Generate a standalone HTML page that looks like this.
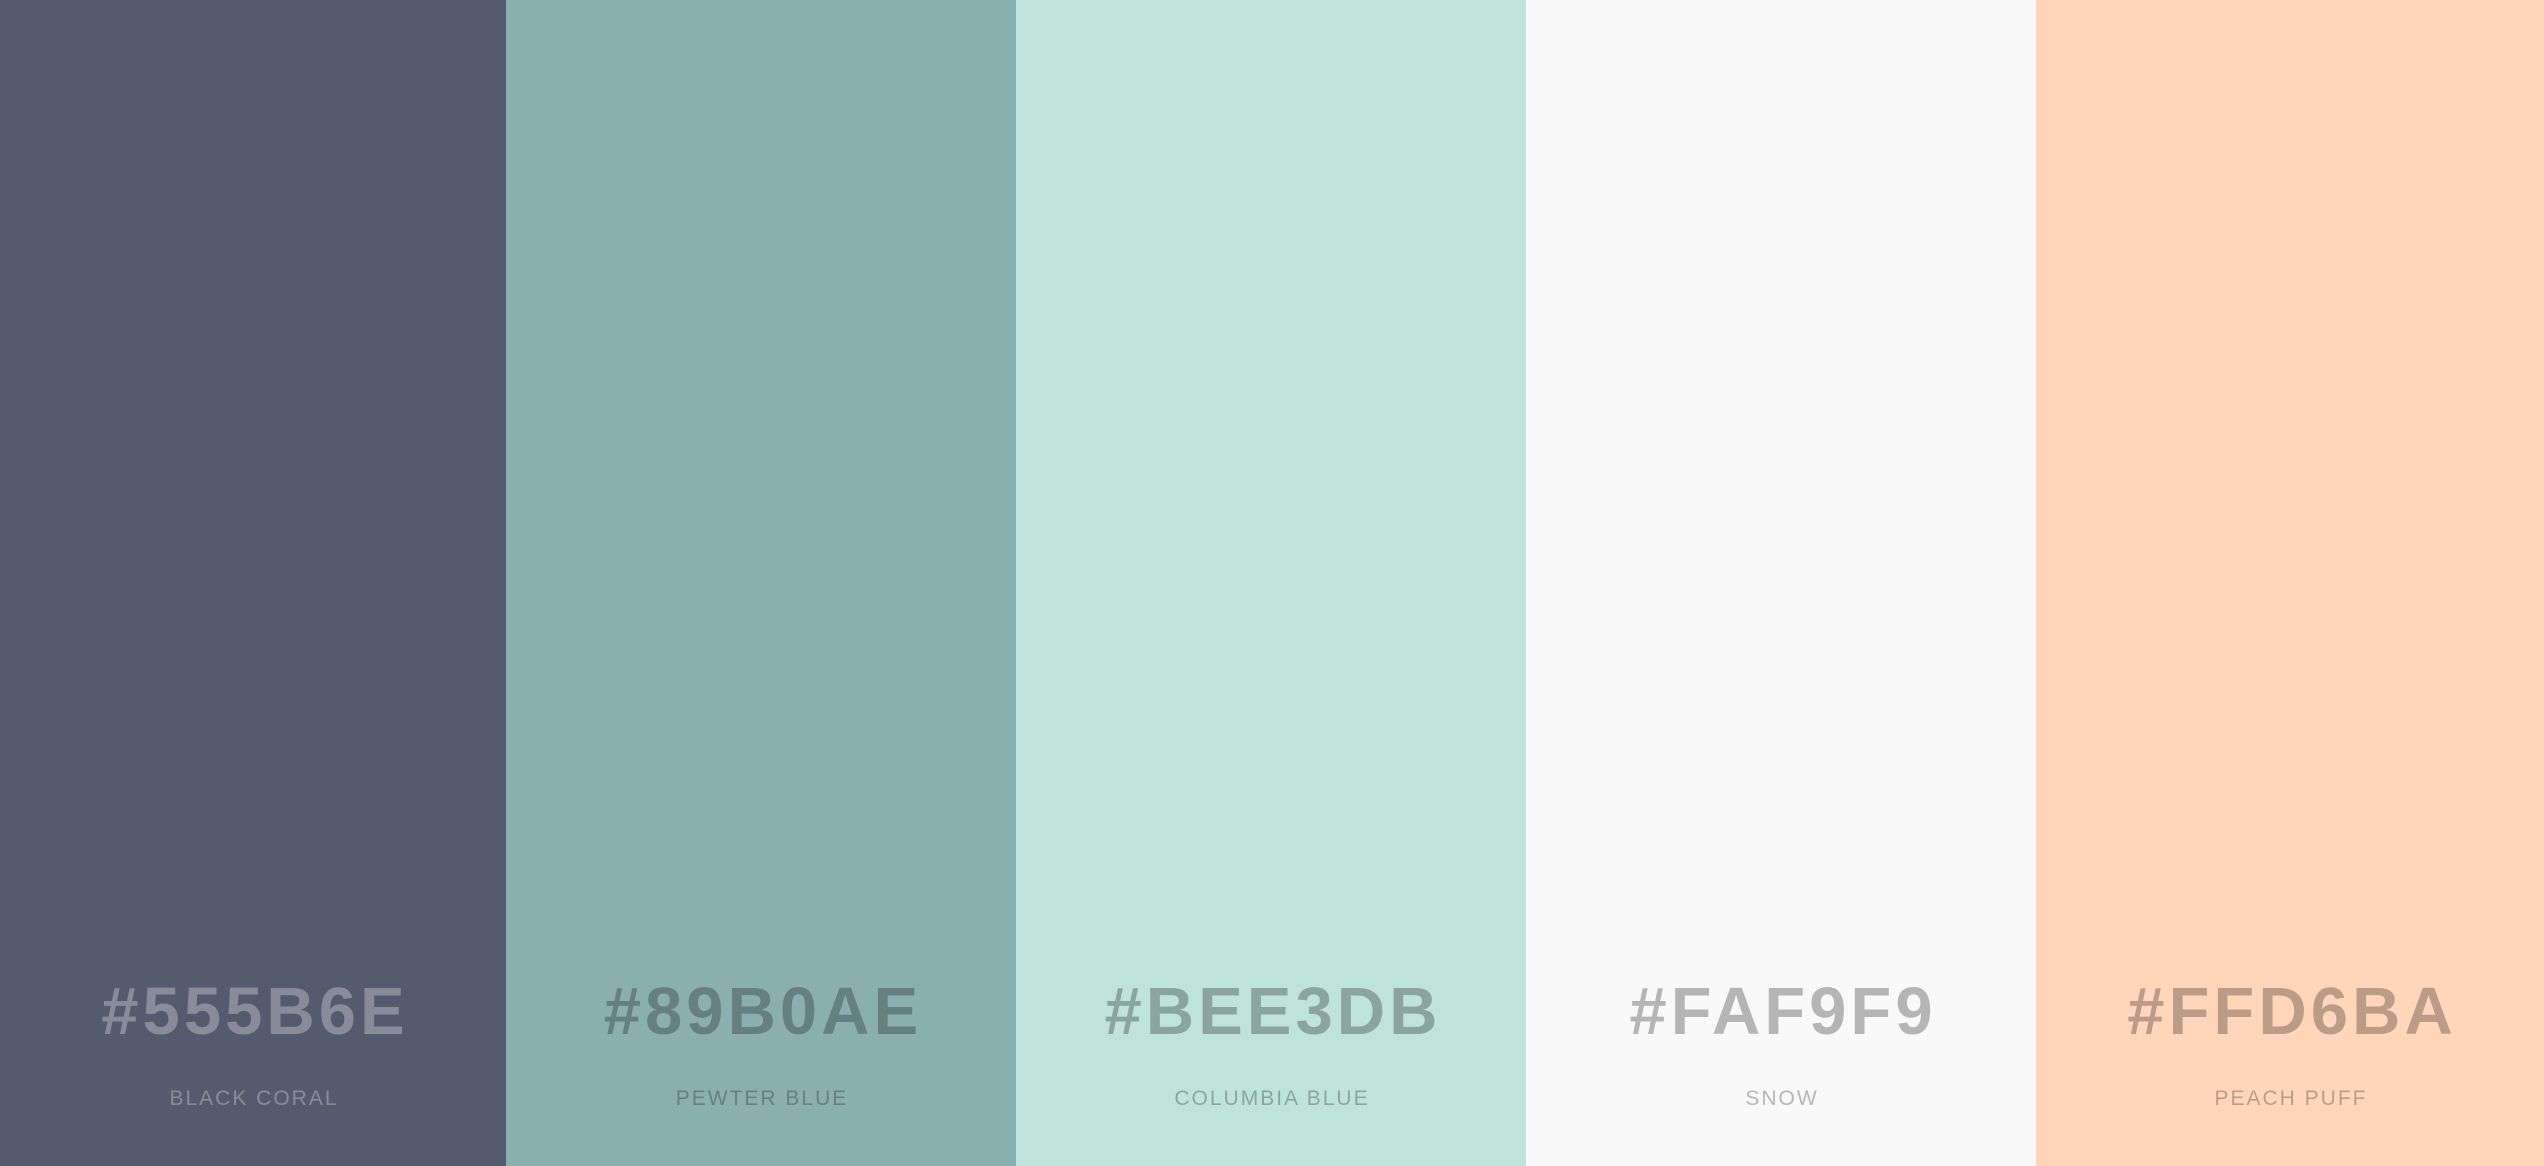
<!DOCTYPE html>
<html><head><style>
html,body{margin:0;padding:0;width:2544px;height:1166px;overflow:hidden}
.c{position:absolute;top:0;height:1166px;width:509px;font-family:"Liberation Sans",sans-serif;}
.h{position:absolute;left:0;right:0;text-align:center;top:972px;font-size:67px;line-height:80px;letter-spacing:4px;height:80px;font-weight:bold;padding-left:4px}
.n{position:absolute;left:0;right:0;text-align:center;top:1084px;font-size:21px;line-height:30px;letter-spacing:2px;padding-left:2px}
.d{color:rgba(255,255,255,0.3)}
.l{color:rgba(0,0,0,0.27)}
</style></head><body>
<div class="c d" style="left:0;background:#555b6e;width:506px"><div class="h">#555B6E</div><div class="n">BLACK CORAL</div></div>
<div class="c l" style="left:506px;background:#89b0ae;width:510px"><div class="h">#89B0AE</div><div class="n">PEWTER BLUE</div></div>
<div class="c l" style="left:1016px;background:#bee3db;width:510px"><div class="h">#BEE3DB</div><div class="n">COLUMBIA BLUE</div></div>
<div class="c l" style="left:1526px;background:#faf9f9;width:510px"><div class="h">#FAF9F9</div><div class="n">SNOW</div></div>
<div class="c l" style="left:2036px;background:#ffd6ba;width:508px"><div class="h">#FFD6BA</div><div class="n">PEACH PUFF</div></div>
</body></html>
